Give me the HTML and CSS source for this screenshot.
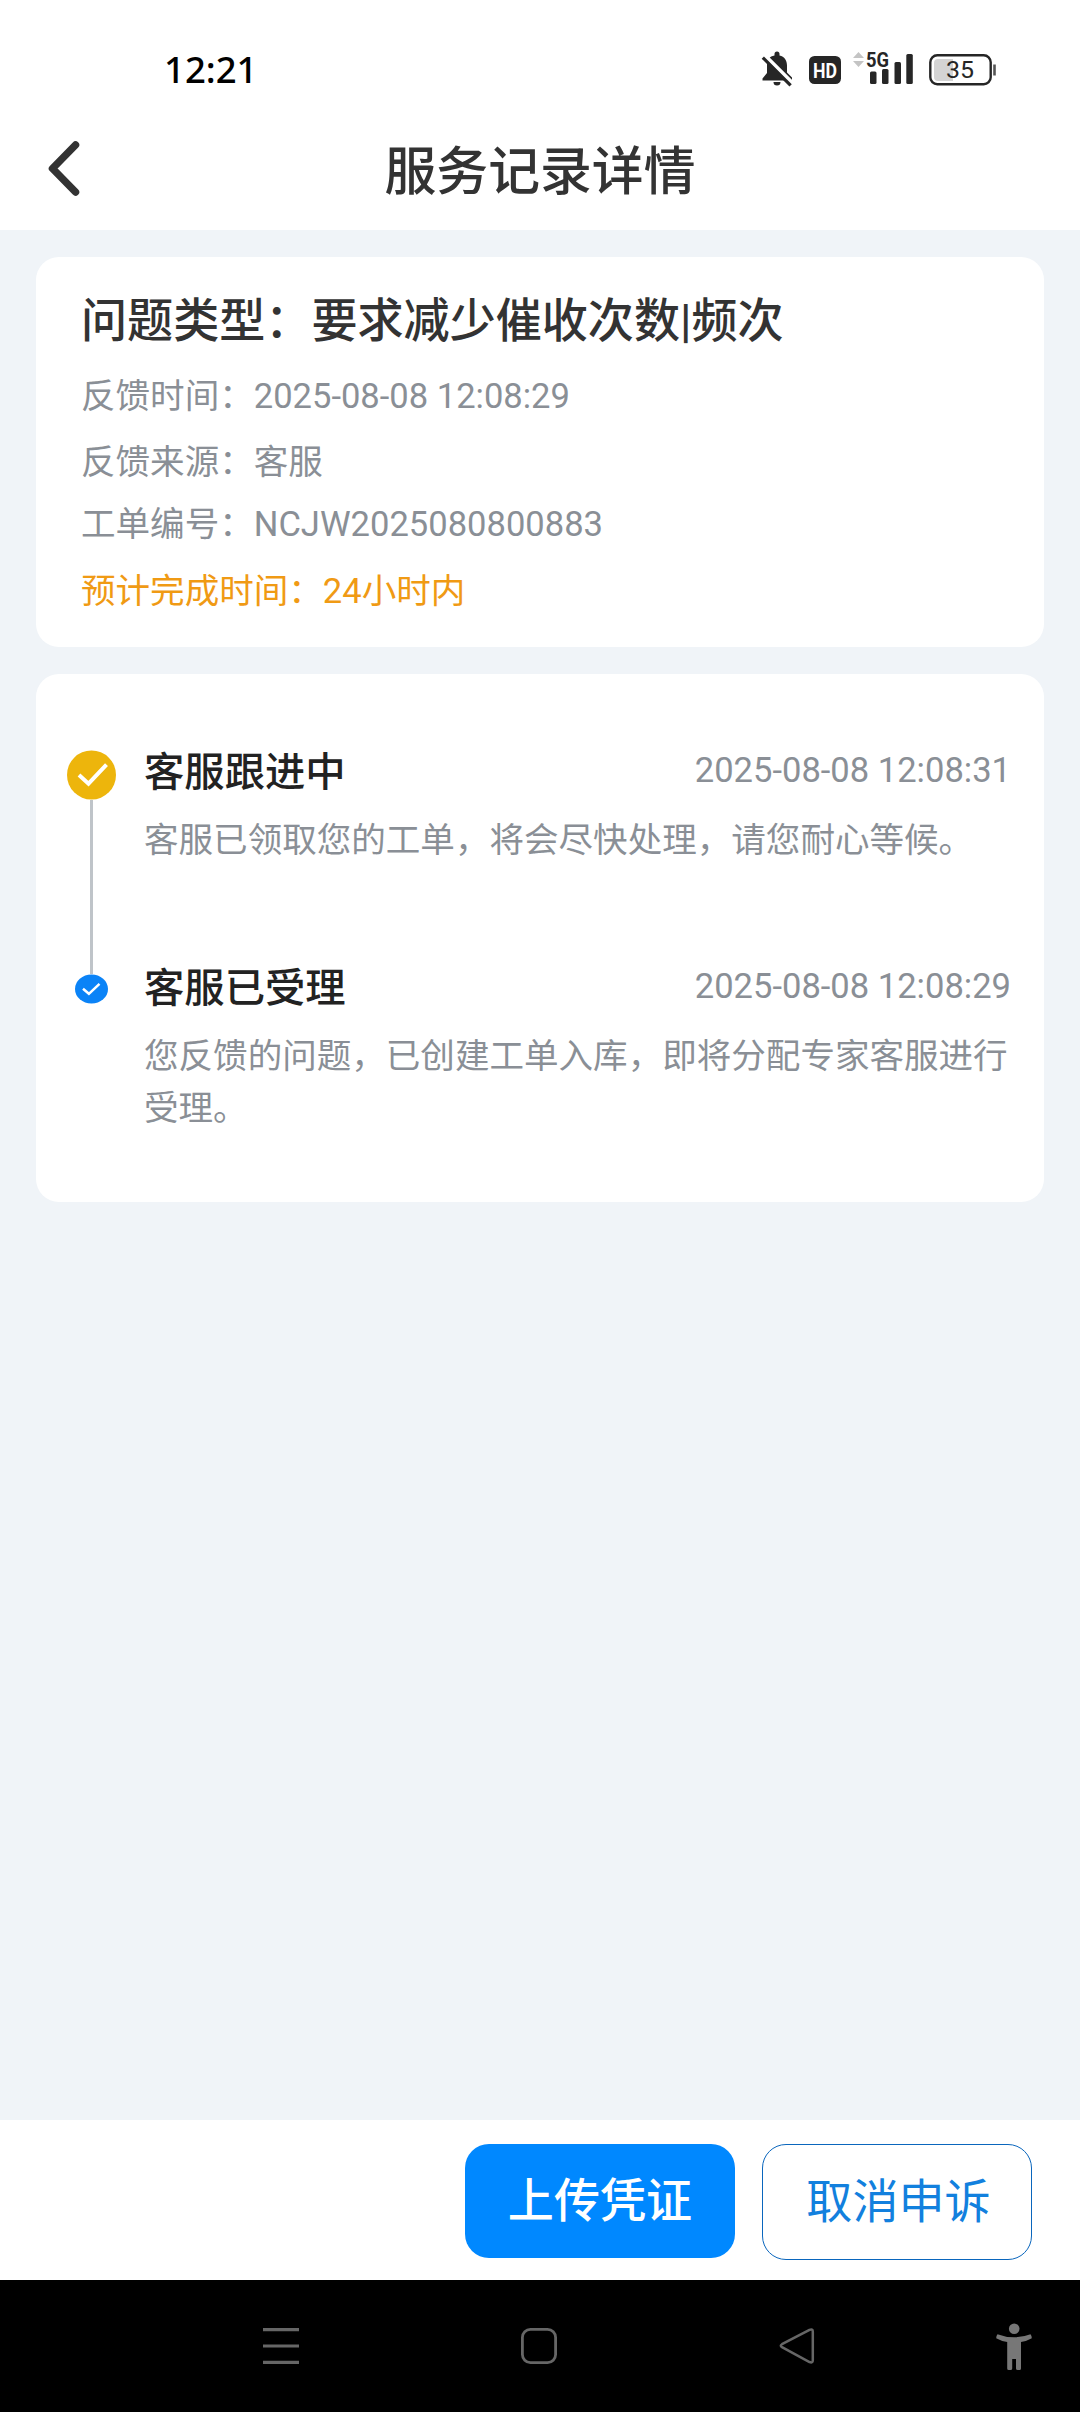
FILE: index.html
```html
<!DOCTYPE html>
<html lang="zh-CN">
<head>
<meta charset="utf-8">
<title>服务记录详情</title>
<link rel="stylesheet" href="styles.css">
</head>
<body>
<div class="screen">
  <header class="top">
    <div class="status">
      <span class="clock">12:21</span>
      <div class="status-icons">
        <svg class="ic-bell" width="32" height="36" viewBox="0 0 32 36">
          <path d="M13.500 4.500V3a2.500 2.500 0 0 1 5 0v1.500C23.500 5.600 26 9.500 26 14.500V21.500l5 5V29.500H1.500V27.500L6 22V13c0-4.500 2.500-7.500 7.500-8.500z" fill="#262626"/>
          <path d="M12.500 31h7a3.500 3.500 0 0 1-7 0z" fill="#262626"/>
          <path d="M3.500 4.200L32 32.700" stroke="#fff" stroke-width="4"/>
          <path d="M1.800 6.600L29.600 34.400" stroke="#262626" stroke-width="3.200"/>
        </svg>
        <svg class="ic-hd" width="32" height="28" viewBox="0 0 32 28">
          <rect width="32" height="28" rx="5.500" fill="#262626"/>
          <text x="4" y="21.800" textLength="24" lengthAdjust="spacingAndGlyphs" class="hd-text">HD</text>
        </svg>
        <svg class="ic-net" width="60" height="40" viewBox="0 -6 60 40">
          <path d="M0 8l5.500-6 5.500 6zM0 11h11l-5.500 6z" fill="#c4c4c4"/>
          <text x="13" y="17.300" textLength="23" lengthAdjust="spacingAndGlyphs" class="net-text">5G</text>
          <g fill="#262626">
            <rect x="17" y="21.500" width="6.500" height="12.500" rx="1.500"/>
            <rect x="29" y="19" width="6.500" height="15" rx="1.500"/>
            <rect x="41.500" y="12" width="6.500" height="22" rx="1.500"/>
            <rect x="53.300" y="4" width="6.500" height="30" rx="1.500"/>
          </g>
        </svg>
        <svg class="ic-battery" width="68" height="32" viewBox="0 0 68 32">
          <rect x="1.300" y="1.300" width="60.400" height="28.900" rx="7" fill="#fff" stroke="#262626" stroke-width="2.400"/>
          <path d="M9 5h15v22H9a4 4 0 0 1-4-4V9a4 4 0 0 1 4-4z" fill="#d4d4d4"/>
          <path d="M65.500 10.500v11" stroke="#555" stroke-width="2.600"/>
          <text x="17" y="24.300" textLength="28" lengthAdjust="spacingAndGlyphs" class="battery-text">35</text>
        </svg>
      </div>
    </div>
    <div class="titlebar">
      <svg class="back" width="36" height="60" viewBox="0 0 36 60">
        <path d="M30.500 7L7.500 30.500l23 23.500" fill="none" stroke="#333" stroke-width="7.500" stroke-linecap="round" stroke-linejoin="round"/>
      </svg>
      <h1>服务记录详情</h1>
    </div>
  </header>

  <main class="content">
    <section class="card summary">
      <h2>问题类型：要求减少催收次数|频次</h2>
      <p>反馈时间：2025-08-08 12:08:29</p>
      <p>反馈来源：客服</p>
      <p class="order-no">工单编号：NCJW2025080800883</p>
      <p class="eta">预计完成时间：24小时内</p>
    </section>

    <section class="card timeline">
      <article class="step current">
        <div class="rail">
          <svg width="50" height="50" viewBox="0 0 50 50">
            <circle cx="24.500" cy="25" r="24.500" fill="#edb50c"/>
            <path d="M12 25l9.500 8.700L39.500 14.700" fill="none" stroke="#fff" stroke-width="4"/>
          </svg>
          <span class="line"></span>
        </div>
        <div class="body">
          <div class="head"><h3>客服跟进中</h3><time>2025-08-08 12:08:31</time></div>
          <p>客服已领取您的工单，将会尽快处理，请您耐心等候。</p>
        </div>
      </article>
      <article class="step done">
        <div class="rail">
          <svg width="34" height="30" viewBox="0 0 34 30">
            <ellipse cx="16.500" cy="15" rx="16.500" ry="14.500" fill="#0b83f7"/>
            <path d="M8 14.800l5.900 5L24.500 9.800" fill="none" stroke="#fff" stroke-width="2.500"/>
          </svg>
        </div>
        <div class="body">
          <div class="head"><h3>客服已受理</h3><time>2025-08-08 12:08:29</time></div>
          <p>您反馈的问题，已创建工单入库，即将分配专家客服进行受理。</p>
        </div>
      </article>
    </section>
  </main>

  <footer class="actions">
    <button class="btn primary">上传凭证</button>
    <button class="btn outline">取消申诉</button>
  </footer>

  <nav class="sysnav">
    <svg width="36" height="36" viewBox="0 0 36 36">
      <path d="M0 1.700h36M0 18h36M0 34.300h36" stroke="#666" stroke-width="3.200"/>
    </svg>
    <svg width="36" height="36" viewBox="0 0 36 36">
      <rect x="1.400" y="1.400" width="33.200" height="33.200" rx="8" fill="none" stroke="#666" stroke-width="2.800"/>
    </svg>
    <svg width="36" height="36" viewBox="0 0 36 36">
      <path d="M30.500 1.900L3 16.200q-2.400 1.500 0 3L30.500 34q3.300 1.300 3.300-1.600V3.400q0-2.800-3.300-1.500z" fill="none" stroke="#666" stroke-width="2.500"/>
    </svg>
    <svg class="person" width="36" height="48" viewBox="0 0 36 48">
      <circle cx="18.200" cy="5.800" r="5.300" fill="#777"/>
      <path d="M1.500 11.200Q18 17.500 34.500 11.200q1.300 1.500 1.300 4Q31 18 25 19V45.500q0 1.500-1.500 1.500h-1.800q-1.700 0-1.700-1.500V36h-3.800v9.500q0 1.500-1.700 1.500h-1.800q-1.500 0-1.500-1.500V19Q5 18 .2 15.200q0-2.500 1.300-4z" fill="#777"/>
    </svg>
  </nav>
</div>
</body>
</html>
```
FILE: styles.css
```css
* { box-sizing: border-box; margin: 0; padding: 0; }

body {
  width: 1080px;
  background: #f0f4f8;
  font-family: Roboto, "Noto Sans CJK SC", sans-serif;
  color: #333;
}

svg { display: block; flex: none; overflow: visible; }

.screen { display: flex; flex-direction: column; height: 2412px; }

.top { height: 230px; background: #fff; }

.status {
  display: flex;
  justify-content: space-between;
  height: 106px;
  padding: 50px 83px 0 164px;
}

.clock {
  margin-top: -1px;
  font: 500 36.5px/40px "Noto Sans", sans-serif;
  color: #000;
}

.status-icons { display: flex; align-items: flex-start; }
.ic-bell { margin-top: 1px; }
.ic-hd { margin: 6px 0 0 16px; }
.ic-net { margin: -6px 0 0 12px; }
.ic-battery { margin: 4px 0 0 16px; }
.hd-text { font: 700 21px Roboto, sans-serif; fill: #fff; }
.net-text { font: 700 21px Roboto, sans-serif; fill: #262626; }
.battery-text { font: 400 24.5px Roboto, sans-serif; fill: #262626; }

.titlebar {
  display: grid;
  grid-template-columns: 80px 1fr 80px;
  align-items: center;
  height: 124px;
  padding: 0 45px;
}

h1 {
  font-size: 51.84px;
  line-height: 72px;
  font-weight: 500;
  text-align: center;
  margin-top: 10px;
}

.content { flex: 1; padding: 27px 36px 0; }

.card { background: #fff; border-radius: 23px; }

.summary { height: 390px; padding: 31px 45px 0; }

h2 {
  font-size: 46.08px;
  line-height: 66px;
  font-weight: 500;
  margin-bottom: 18px;
}

.summary p {
  font-size: 34.56px;
  line-height: 48px;
  margin-bottom: 18px;
  color: #8a8f96;
}
.summary .order-no { margin: -4px 0 19px; }
.summary .eta { color: #f09a14; }

.timeline {
  height: 528px;
  margin-top: 27px;
  padding: 72px 33px 0 31px;
}

.step { display: flex; gap: 27px; }
.current { height: 216px; }

.rail {
  display: flex;
  flex-direction: column;
  align-items: center;
  width: 50px;
  padding-top: 4px;
}
.done .rail { padding-top: 12px; }
.line { flex: 1; width: 3px; margin: 0 1px -12px 0; background: #bfc4c9; }

.body { flex: 1; }

.head {
  display: flex;
  justify-content: space-between;
  align-items: center;
}

h3 {
  font-size: 40.32px;
  line-height: 54px;
  font-weight: 500;
  color: #222;
}

time { font-size: 34.56px; line-height: 48px; margin-bottom: 6px; color: #8a8f96; }

.step p {
  font-size: 34.56px;
  line-height: 52px;
  margin: 14px -3px 0 0;
  color: #8a8f96;
}

.actions {
  display: flex;
  justify-content: flex-end;
  gap: 27px;
  height: 160px;
  padding: 24px 48px 0;
  background: #fff;
}

.btn {
  width: 270px;
  height: 114px;
  border: 0;
  border-radius: 24px;
  font: 400 46.08px/66px Roboto, "Noto Sans CJK SC", sans-serif;
}
.primary { background: #0088ff; color: #fff; font-weight: 500; }
.outline {
  height: 116px;
  padding-left: 3px;
  background: #fff;
  border: 1px solid #0a66bd;
  color: #1280de;
}

.sysnav {
  display: flex;
  align-items: flex-start;
  gap: 222px;
  height: 132px;
  padding: 48px 0 0 263px;
  background: #000;
}
.person { margin: -5px 0 0 -41px; }
```
